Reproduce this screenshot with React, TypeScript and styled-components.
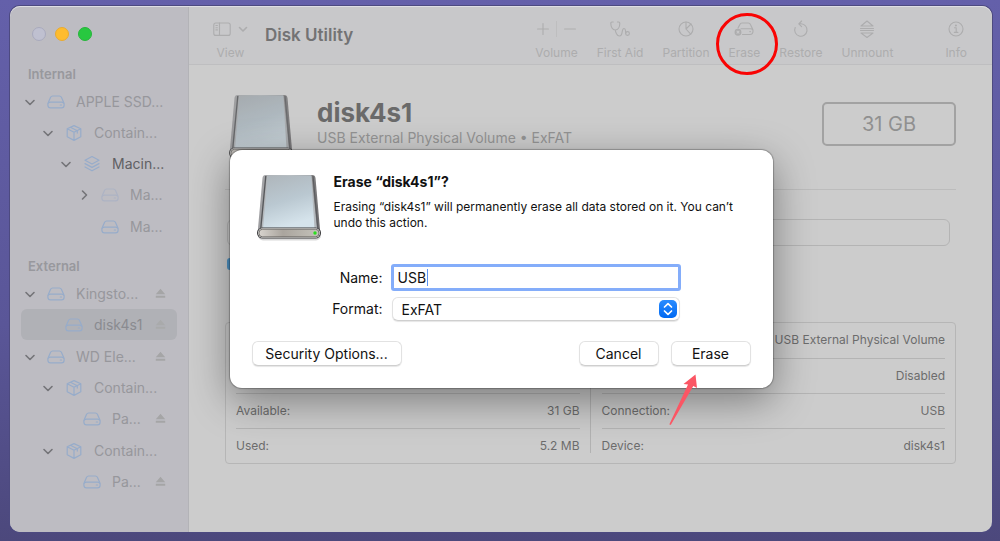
import React, { useId } from "react";
import styled, { createGlobalStyle, css } from "styled-components";

const GlobalStyle = createGlobalStyle`
  * { box-sizing: border-box; }
  body {
    margin: 0;
    background: #605ca6;
    font-family: Inter, "Liberation Sans", sans-serif;
    font-size: 14px;
    color: #111;
  }
  button { font: inherit; color: inherit; border: 0; padding: 0; background: none; }
  ul { list-style: none; margin: 0; padding: 0; }
`;

/* ---------- Window ---------- */

const Desktop = styled.div`
  min-height: 100vh;
  display: flex;
  padding: 6px 8px 9px 10px;
  background: linear-gradient(#6460aa, #5a5698 60%, #4c487c);
`;

const Window = styled.div`
  position: relative;
  flex: 1;
  display: flex;
  overflow: hidden;
  border-radius: 10px;
  background: #ccc;
  box-shadow: 0 0 0 1px #4d4a80;

  &::after {
    content: "";
    position: absolute;
    inset: 0;
    z-index: 3;
    border-radius: inherit;
    box-shadow: inset 0 1px 0 #dedee4;
    pointer-events: none;
  }
`;

/* ---------- Sidebar ---------- */

const Sidebar = styled.nav`
  position: relative;
  z-index: 2;
  flex: none;
  width: 179px;
  padding: 0 11px 20px;
  background: #bdbcc2;
  border-right: 1px solid #b3b3b7;
`;

const TrafficLights = styled.div`
  display: flex;
  align-items: center;
  gap: 9px;
  height: 56px;
  padding: 0 0 0 11px;
`;

const Light = styled.button<{ $color: string; $edge: string }>`
  width: 14px;
  height: 14px;
  border-radius: 50%;
  background: ${(p) => p.$color};
  border: 1px solid ${(p) => p.$edge};
`;

const SidebarGroup = styled.section`
  margin-bottom: 12px;
`;

const GroupTitle = styled.h2`
  margin: 0;
  padding-left: 7px;
  font-size: 13px;
  line-height: 24px;
  font-weight: 600;
  color: #98989d;
`;

const Tree = styled.ul`
  display: grid;
  gap: 1px;
`;

const Row = styled.div<{ $level: number; $selected?: boolean; $strong?: boolean }>`
  display: flex;
  align-items: center;
  gap: 11px;
  height: 31px;
  padding: 0 11px 0 ${(p) => 3 + p.$level * 18}px;
  border-radius: 6px;
  color: ${(p) => (p.$strong ? "#606064" : "#97979c")};
  ${(p) =>
    p.$selected &&
    css`
      background: #b0b1b6;
      color: #8a8b90;
    `}
`;

const Toggle = styled.button`
  display: flex;
  flex: none;
  width: 12px;
  height: 12px;
  color: #747478;
`;

const ToggleSpace = styled.span`
  flex: none;
  width: 12px;
`;

const NodeIcon = styled.span<{ $faded?: boolean }>`
  display: flex;
  flex: none;
  width: 18px;
  color: ${(p) => (p.$faded ? "#adb3c4" : "#97acca")};
`;

const NodeName = styled.span`
  flex: 1;
  white-space: nowrap;
  line-height: 20px;
`;

const EjectButton = styled.button<{ $faded?: boolean }>`
  display: flex;
  flex: none;
  color: ${(p) => (p.$faded ? "#a9aaab" : "#a5a5a6")};
`;

type IconKind = "drive" | "box" | "layers";
type Node = {
  name: string;
  icon: IconKind;
  open?: boolean;
  closed?: boolean;
  faded?: boolean;
  strong?: boolean;
  selected?: boolean;
  eject?: boolean;
  children?: Node[];
};

const internal: Node[] = [
  {
    name: "APPLE SSD...",
    icon: "drive",
    open: true,
    children: [
      {
        name: "Contain...",
        icon: "box",
        open: true,
        children: [
          {
            name: "Macin...",
            icon: "layers",
            open: true,
            strong: true,
            children: [
              { name: "Ma...", icon: "drive", closed: true, faded: true },
              { name: "Ma...", icon: "drive" },
            ],
          },
        ],
      },
    ],
  },
];

const external: Node[] = [
  {
    name: "Kingsto...",
    icon: "drive",
    open: true,
    eject: true,
    children: [{ name: "disk4s1", icon: "drive", selected: true, eject: true }],
  },
  {
    name: "WD Ele...",
    icon: "drive",
    open: true,
    eject: true,
    children: [
      {
        name: "Contain...",
        icon: "box",
        open: true,
        children: [{ name: "Pa...", icon: "drive", eject: true }],
      },
      {
        name: "Contain...",
        icon: "box",
        open: true,
        children: [{ name: "Pa...", icon: "drive", eject: true }],
      },
    ],
  },
];

const stroke = {
  fill: "none",
  stroke: "currentColor",
  strokeLinecap: "round" as const,
  strokeLinejoin: "round" as const,
};

const Chevron = ({ right = false }: { right?: boolean }) => (
  <svg width="12" height="12" viewBox="0 0 12 12" {...stroke} strokeWidth="1.6" aria-hidden>
    <path d={right ? "M4.5 2 8.5 6l-4 4" : "M2 4.5 6 8.5l4-4"} />
  </svg>
);

const TreeIcon = ({ kind }: { kind: IconKind }) => {
  if (kind === "box")
    return (
      <svg width="18" height="18" viewBox="0 0 18 18" {...stroke} strokeWidth="1.2" aria-hidden>
        <path d="M9 1.6 15.8 4.8v8L9 16.4l-6.8-3.6v-8zM2.2 4.8 9 8.2l6.8-3.4M9 8.2v8.2M5.4 3.3l6.9 3.4v2.4" />
      </svg>
    );
  if (kind === "layers")
    return (
      <svg width="18" height="18" viewBox="0 0 18 18" {...stroke} strokeWidth="1.2" aria-hidden>
        <path d="M9 1.5 16 5.2 9 9 2 5.2zM2 8.6l7 3.8 7-3.8M2 12l7 3.8 7-3.8" />
      </svg>
    );
  return (
    <svg width="18" height="18" viewBox="0 0 18 18" {...stroke} strokeWidth="1.2" aria-hidden>
      <path d="M5.6 3h6.8q1.4 0 2 1.3l2.2 5q.5 1 .5 2v1q0 2.6-2.6 2.6h-11Q.9 14.9.9 12.3v-1q0-1 .5-2l2.2-5Q4.2 3 5.6 3z" />
      <path d="M1.2 10.2q1-1 2.300-1h11q1.300 0 2.300 1M13.300 12h1.200" />
    </svg>
  );
};

const EjectIcon = () => (
  <svg width="11" height="11" viewBox="0 0 11 11" fill="currentColor" aria-hidden>
    <path d="M5.5.8 10.2 6.300H.8zM.8 7.800h9.400v1.900H.8z" />
  </svg>
);

const TreeNodes = ({ nodes, level }: { nodes: Node[]; level: number }) => (
  <Tree>
    {nodes.map((n, i) => (
      <li key={i}>
        <Row $level={level} $selected={n.selected} $strong={n.strong}>
          {n.open || n.closed ? (
            <Toggle aria-label={`Toggle ${n.name}`} aria-expanded={!!n.open}>
              <Chevron right={n.closed} />
            </Toggle>
          ) : (
            <ToggleSpace />
          )}
          <NodeIcon $faded={n.faded}>
            <TreeIcon kind={n.icon} />
          </NodeIcon>
          <NodeName>{n.name}</NodeName>
          {n.eject && (
            <EjectButton aria-label={`Eject ${n.name}`} $faded={n.selected}>
              <EjectIcon />
            </EjectButton>
          )}
        </Row>
        {n.children && <TreeNodes nodes={n.children} level={level + 1} />}
      </li>
    ))}
  </Tree>
);

/* ---------- Toolbar ---------- */

const Main = styled.main`
  flex: 1;
  min-width: 0;
`;

const Toolbar = styled.header`
  display: flex;
  align-items: flex-start;
  height: 59px;
  padding: 13px 25px 0 24px;
  background: #c8c8ca;
  border-bottom: 1px solid #bebec0;
`;

const AppTitle = styled.h1`
  margin: 4px auto 0 17px;
  font-size: 17px;
  line-height: 24px;
  font-weight: 600;
  color: #737374;
`;

const Actions = styled.div`
  display: flex;
  gap: 19px;
`;

const ToolItem = styled.div<{ $spaced?: boolean }>`
  position: relative;
  display: flex;
  flex-direction: column;
  align-items: center;
  gap: 6px;
  margin-left: ${(p) => (p.$spaced ? "33px" : "0")};
  font-size: 12px;
  line-height: 16px;
  color: #adadae;
`;

const ToolIcons = styled.span`
  display: flex;
  align-items: center;
  justify-content: center;
  gap: 7px;
  height: 20px;

  button { display: flex; }
`;

const Separator = styled.span`
  width: 1px;
  height: 16px;
  background: #bebebf;
`;

const Highlight = styled.span`
  position: absolute;
  top: 50%;
  left: 50%;
  width: 62px;
  height: 62px;
  margin: -27px 0 0 -28px;
  border: 3px solid #f90404;
  border-radius: 50%;
  pointer-events: none;
`;

const ToolSvg = ({ children, w = 20 }: { children: React.ReactNode; w?: number }) => (
  <svg width={w} height="20" viewBox={`0 0 ${w} 20`} {...stroke} strokeWidth="1.1" aria-hidden>
    {children}
  </svg>
);

/* ---------- Volume details ---------- */

const Content = styled.div`
  padding: 28px 36px 40px;
`;

const VolumeHeader = styled.div`
  display: flex;
  align-items: flex-start;
  height: 97px;
  padding-left: 3px;
  border-bottom: 1px solid #bcbcbc;
`;

const DimIcon = styled.span`
  display: flex;
  opacity: 0.8;
  filter: brightness(0.9);
`;

const VolumeText = styled.div`
  flex: 1;
  padding: 5px 0 0 23px;
`;

const VolumeName = styled.h2`
  margin: 0;
  font-size: 26px;
  line-height: 30px;
  font-weight: 700;
  color: #6a6a6a;
`;

const VolumeKind = styled.p`
  margin: 0;
  font-size: 14px;
  line-height: 20px;
  color: #949494;
`;

const Capacity = styled.div`
  width: 134px;
  margin-top: 9px;
  border: 2px solid #a2a2a2;
  border-radius: 5px;
  font-size: 20px;
  line-height: 40px;
  text-align: center;
  color: #909090;
`;

const UsageBar = styled.div`
  height: 27px;
  margin: 29px 6px 0 2px;
  border: 1px solid #b4b4b4;
  border-radius: 6px;
`;

const Legend = styled.div`
  display: flex;
  height: 12px;
  margin: 12px 2px 52px;
`;

const Swatch = styled.span`
  width: 12px;
  height: 12px;
  border-radius: 3px;
  background: #4f93c4;
`;

const Details = styled.div`
  display: flex;
  padding: 0 10px;
  border: 1px solid #b6b6b6;
  border-radius: 4px;
`;

const DetailTable = styled.table`
  flex: 1;
  border-collapse: collapse;
  font-size: 12px;
  line-height: 16px;
  color: #6c6c6c;

  & + & {
    position: relative;
    margin-left: 22px;
  }
  & + &::before {
    content: "";
    position: absolute;
    top: 10px;
    bottom: 10px;
    left: -12px;
    width: 1px;
    background: #b2b2b2;
  }
  th,
  td {
    height: 35px;
    padding: 0;
    font-weight: 400;
    white-space: nowrap;
  }
  th { text-align: left; }
  td { text-align: right; }
  tr + tr th,
  tr + tr td { border-top: 1px solid #b4b4b4; }
`;

const DriveSvg = styled.svg`
  flex: none;
`;

const DriveArt = () => {
  const id = useId().replace(/:/g, "");
  return (
    <DriveSvg width="66" height="68" viewBox="0 0 66 68" aria-hidden>
      <defs>
        <linearGradient id={`${id}t`} x1="0" y1="0" x2="0.3" y2="1">
          <stop offset="0" stopColor="#aeb5ba" />
          <stop offset="0.55" stopColor="#bac8d1" />
          <stop offset="1" stopColor="#d5e3eb" />
        </linearGradient>
        <linearGradient id={`${id}e`}>
          <stop offset="0" stopColor="#9b9b9e" />
          <stop offset="0.5" stopColor="#c8ccce" />
          <stop offset="1" stopColor="#6c6a6c" />
        </linearGradient>
        <linearGradient id={`${id}f`}>
          <stop offset="0" stopColor="#d8d4ce" />
          <stop offset="0.4" stopColor="#aaa59e" />
          <stop offset="1" stopColor="#c4c2ba" />
        </linearGradient>
      </defs>
      <rect x="2" y="57" width="63" height="10.5" rx="5" fill="#000" opacity="0.15" />
      <path d="M9.5 2h47q2.500 0 3 3l4.800 55H1.600L6.500 5q.4-3 3-3z" fill={`url(#${id}e)`} />
      <path d="M11 2.600h44.500l5.500 53H5.500z" fill="#b4b9bd" />
      <path d="M12 2.600h43l3.500 53H7z" fill={`url(#${id}t)`} />
      <path d="M9.800 3 4.800 55" stroke="#55575a" strokeWidth="1.300" />
      <path d="M57 3 61.800 55" stroke="#5c5d60" strokeWidth="1.200" />
      <rect x="1" y="54.500" width="64" height="11" rx="5.500" fill="#38383a" />
      <rect x="2" y="55.200" width="62" height="9.600" rx="4.800" fill="#eeeeec" />
      <rect x="2.900" y="56.200" width="60.200" height="7.700" rx="3.800" fill={`url(#${id}f)`} stroke="#5a5856" strokeWidth="0.8" />
      <circle cx="59" cy="60" r="1.700" fill="#28df1c" />
    </DriveSvg>
  );
};

/* ---------- Erase sheet ---------- */

const SheetLayer = styled.div`
  position: absolute;
  inset: 0;
  z-index: 1;
  display: flex;
  justify-content: center;
  align-items: flex-start;
  padding: 144px 20px 0;
`;

const Sheet = styled.form`
  position: relative;
  width: 543px;
  padding: 23px 22px 22px;
  border-radius: 12px;
  background: #fff;
  box-shadow: 0 0 1px 1px rgba(0, 0, 0, 0.25), 0 12px 40px rgba(0, 0, 0, 0.4);
`;

const SheetTop = styled.div`
  display: flex;
  gap: 12px;
  padding-left: 4px;
`;

const SheetTitle = styled.h2`
  margin: 0 0 8px;
  font-size: 14px;
  line-height: 18px;
  font-weight: 700;
`;

const SheetText = styled.p`
  max-width: 420px;
  margin: 0;
  font-size: 12px;
  line-height: 16px;
`;

const Fields = styled.div`
  display: grid;
  grid-template-columns: 131px minmax(0, 290px);
  column-gap: 8px;
  row-gap: 6px;
  align-items: center;
  margin-top: 23px;
`;

const Label = styled.label`
  text-align: right;
  line-height: 20px;
`;

const Control = styled.div`
  position: relative;
  display: flex;
`;

const TextBox = styled.input`
  width: 100%;
  height: 27px;
  padding: 0 4px;
  border: 3px solid #84adfa;
  border-radius: 3px;
  outline: 0;
  background: #fff;
  font: inherit;
  color: #111;
`;

const Caret = styled.span`
  position: absolute;
  top: 5px;
  left: 36px;
  width: 1px;
  height: 17px;
  background: #5b95f5;
`;

const raised = css`
  border: 1px solid #e2e2e2;
  border-bottom-color: #cfcfcf;
  border-radius: 6px;
  background: #fff;
  box-shadow: 0 1px 1px rgba(0, 0, 0, 0.1);
`;

const Select = styled.select`
  ${raised}
  appearance: none;
  width: 100%;
  height: 24px;
  margin: 0 1px;
  padding: 0 28px 0 9px;
  font: inherit;
  color: #111;
`;

const Stepper = styled.span`
  position: absolute;
  top: 3px;
  right: 4px;
  display: flex;
  width: 18px;
  height: 18px;
  border-radius: 5px;
  background: linear-gradient(#2a8cff, #0069f2);
  color: #fff;
  pointer-events: none;
`;

const SheetButtons = styled.div`
  display: flex;
  gap: 12px;
  margin-top: 20px;
`;

const PushButton = styled.button<{ $wide?: boolean }>`
  ${raised}
  width: ${(p) => (p.$wide ? "150px" : "80px")};
  height: 25px;
  margin-right: ${(p) => (p.$wide ? "auto" : "0")};
  line-height: 20px;
`;

const Pointer = styled.svg`
  position: absolute;
  right: 74px;
  bottom: -38px;
  pointer-events: none;
`;

const App = () => (
  <>
    <GlobalStyle />
    <Desktop>
      <Window>
        <Sidebar aria-label="Disks">
          <TrafficLights>
            <Light aria-label="Close" $color="#bfc0d0" $edge="#a9aabd" />
            <Light aria-label="Minimize" $color="#febc2e" $edge="#e9ab30" />
            <Light aria-label="Zoom" $color="#28c840" $edge="#27b53b" />
          </TrafficLights>
          <SidebarGroup>
            <GroupTitle>Internal</GroupTitle>
            <TreeNodes nodes={internal} level={0} />
          </SidebarGroup>
          <SidebarGroup>
            <GroupTitle>External</GroupTitle>
            <TreeNodes nodes={external} level={0} />
          </SidebarGroup>
        </Sidebar>

        <Main>
          <Toolbar>
            <ToolItem as="button">
              <ToolIcons>
                <ToolSvg w={18}>
                  <rect x="0.8" y="4" width="16.4" height="12.4" rx="2" />
                  <path d="M6.5 4v12.400M2.900 6.500h1.500M2.900 8.700h1.500M2.900 10.900h1.500" />
                </ToolSvg>
                <svg width="10" height="20" viewBox="0 0 10 20" {...stroke} strokeWidth="1.6" aria-hidden>
                  <path d="m1.500 8.500 3.500 3.500 3.500-3.500" />
                </svg>
              </ToolIcons>
              View
            </ToolItem>
            <AppTitle>Disk Utility</AppTitle>
            <Actions>
              <ToolItem role="group" aria-label="Volume actions">
                <ToolIcons>
                  <button aria-label="Add volume">
                    <ToolSvg w={12}>
                      <path d="M6 4.500v11M.6 10h10.800" />
                    </ToolSvg>
                  </button>
                  <Separator />
                  <button aria-label="Remove volume">
                    <ToolSvg w={12}>
                      <path d="M.6 10h10.800" />
                    </ToolSvg>
                  </button>
                </ToolIcons>
                Volume
              </ToolItem>
              <ToolItem as="button">
                <ToolIcons>
                  <ToolSvg w={20}>
                    <path d="M3.200 3H2Q.8 3 .8 4.300C.8 8 2.500 11 5.300 11s4.500-3 4.500-6.700Q9.800 3 8.600 3H7.400M5.300 11c.2 2 1.500 6 4.200 6 4 0 1.500-7.500 4.500-7.500 2.200 0 1 2.800 2 4.500" />
                    <circle cx="17.500" cy="14.500" r="1.900" />
                  </ToolSvg>
                </ToolIcons>
                First Aid
              </ToolItem>
              <ToolItem as="button">
                <ToolIcons>
                  <ToolSvg w={18}>
                    <circle cx="9" cy="10" r="7" />
                    <path d="M9 3v7l5-5M9 10l4.700 5.200" />
                  </ToolSvg>
                </ToolIcons>
                Partition
              </ToolItem>
              <ToolItem as="button">
                <ToolIcons>
                  <ToolSvg w={20}>
                    <path d="M4 9 6 5.300Q6.500 4 8 4h6.300q1.500 0 2 1.300l2.400 5q.3.700.3 1.700 0 3.500-3 3.500H8.500M7 9.800h9.500q1.500 0 2.200 1M15.800 12.600h.6" />
                    <circle cx="4" cy="13.200" r="2.900" fill="#adadae" />
                    <path d="m3 12.200 2 2m0-2-2 2" stroke="#c8c8ca" />
                  </ToolSvg>
                </ToolIcons>
                Erase
                <Highlight />
              </ToolItem>
              <ToolItem as="button">
                <ToolIcons>
                  <ToolSvg w={16}>
                    <path d="M2.200 8.500A6.200 6.200 0 1 0 8 4.800H5.800M8.600 2 5.800 4.800l2.800 2.800" />
                  </ToolSvg>
                </ToolIcons>
                Restore
              </ToolItem>
              <ToolItem as="button">
                <ToolIcons>
                  <ToolSvg w={16}>
                    <path d="M8 2 14 7H2zM1.500 9.500h13M1.500 11.500h13M8 18.500l6-4.500H2z" />
                  </ToolSvg>
                </ToolIcons>
                Unmount
              </ToolItem>
              <ToolItem as="button" $spaced>
                <ToolIcons>
                  <ToolSvg w={18}>
                    <circle cx="9" cy="10" r="7" />
                    <path d="M7.500 8.800h1.700v4.500M7.300 13.400h3.600" />
                    <circle cx="8.900" cy="6.500" r="0.5" fill="currentColor" />
                  </ToolSvg>
                </ToolIcons>
                Info
              </ToolItem>
            </Actions>
          </Toolbar>

          <Content>
            <VolumeHeader>
              <DimIcon>
                <DriveArt />
              </DimIcon>
              <VolumeText>
                <VolumeName>disk4s1</VolumeName>
                <VolumeKind>USB External Physical Volume • ExFAT</VolumeKind>
              </VolumeText>
              <Capacity>31 GB</Capacity>
            </VolumeHeader>
            <UsageBar />
            <Legend>
              <Swatch />
            </Legend>
            <Details>
              <DetailTable>
                <tbody>
                  <tr><th scope="row" aria-label="Mount Point" /><td /></tr>
                  <tr><th scope="row" aria-label="Capacity" /><td /></tr>
                  <tr><th scope="row">Available:</th><td>31 GB</td></tr>
                  <tr><th scope="row">Used:</th><td>5.2 MB</td></tr>
                </tbody>
              </DetailTable>
              <DetailTable>
                <tbody>
                  <tr><th scope="row" aria-label="Type" /><td>USB External Physical Volume</td></tr>
                  <tr><th scope="row" aria-label="Owners" /><td>Disabled</td></tr>
                  <tr><th scope="row">Connection:</th><td>USB</td></tr>
                  <tr><th scope="row">Device:</th><td>disk4s1</td></tr>
                </tbody>
              </DetailTable>
            </Details>
          </Content>
        </Main>

        <SheetLayer>
          <Sheet role="dialog" aria-labelledby="sheet-title" onSubmit={(e) => e.preventDefault()}>
            <SheetTop>
              <DriveArt />
              <div>
                <SheetTitle id="sheet-title">Erase “disk4s1”?</SheetTitle>
                <SheetText>
                  Erasing “disk4s1” will permanently erase all data stored on it. You can’t undo this action.
                </SheetText>
              </div>
            </SheetTop>
            <Fields>
              <Label htmlFor="volume-name">Name:</Label>
              <Control>
                <TextBox id="volume-name" defaultValue="USB" />
                <Caret />
              </Control>
              <Label htmlFor="volume-format">Format:</Label>
              <Control>
                <Select id="volume-format" defaultValue="ExFAT">
                  <option>ExFAT</option>
                </Select>
                <Stepper>
                  <svg width="18" height="18" viewBox="0 0 18 18" {...stroke} strokeWidth="1.7" aria-hidden>
                    <path d="M5.500 7 9 3.700 12.500 7M5.500 11 9 14.300l3.500-3.300" />
                  </svg>
                </Stepper>
              </Control>
            </Fields>
            <SheetButtons>
              <PushButton type="button" $wide>Security Options...</PushButton>
              <PushButton type="button">Cancel</PushButton>
              <PushButton type="submit">Erase</PushButton>
            </SheetButtons>
            <Pointer width="30" height="52" viewBox="0 0 30 52" aria-hidden>
              <path d="M26.500.5 14.500 10l4.500.5L.5 50q.3 1.500 1.500.5L24.300 12l3.700 2z" fill="#fb5664" />
            </Pointer>
          </Sheet>
        </SheetLayer>
      </Window>
    </Desktop>
  </>
);

export default App;
